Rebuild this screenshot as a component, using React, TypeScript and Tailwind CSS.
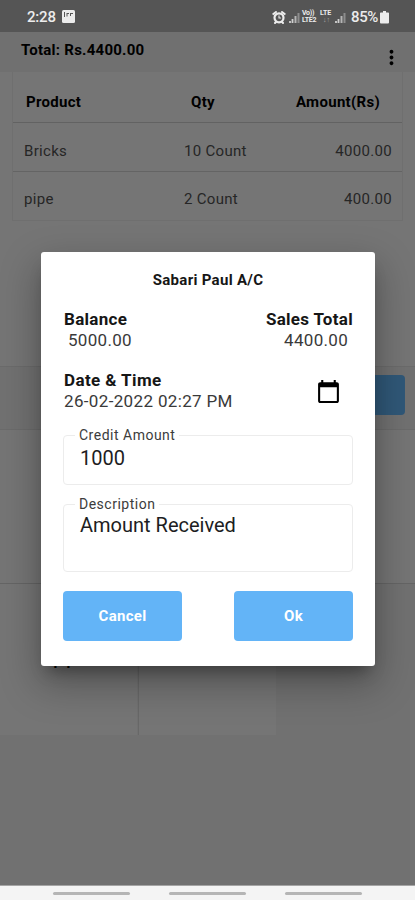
import { MdCalendarToday, MdMoreVert } from "react-icons/md";

const items = [
  { name: "Bricks", qty: "10 Count", amount: "4000.00" },
  { name: "pipe", qty: "2 Count", amount: "400.00" },
];

function Signal() {
  return (
    <svg width="12" height="13" viewBox="0 0 12 13" className="mt-px">
      <path d="M1 10v2M3.500 8v4" stroke="#d0d0d0" strokeWidth="1.8" />
      <path d="M6.500 5v7" stroke="#b5b5b5" strokeWidth="2" />
      <path d="M9.500 2v10" stroke="#8c8c8c" strokeWidth="2" />
    </svg>
  );
}

function Alarm() {
  return (
    <svg width="14" height="13" viewBox="0 0 14 13" fill="none" stroke="#ececec" strokeLinecap="round">
      <circle cx="7" cy="6.8" r="4.5" strokeWidth="2.2" />
      <path d="M1.300 3L4 1M12.700 3L10 1M3 12l1-1M11 12l-1-1" strokeWidth="2" />
      <path d="M7 4.800v2.200h1.600" strokeWidth="1.1" />
    </svg>
  );
}

function StatusBar() {
  return (
    <div className="flex h-8 items-center bg-[#555555] pl-[27px] pr-[26px] pt-[2px] text-[#ececec]">
      <span className="w-[35px] text-[15px] font-medium tracking-[-0.2px]">2:28</span>
      <svg width="13" height="13" viewBox="0 0 13 13" className="-mt-0.5">
        <rect width="13" height="13" rx="1.5" fill="#ececec" />
        <path d="M2.500 2v5M5 3v3.500M5 3.500h2M8.500 3v3M8.500 3.500h2.500" stroke="#555555" fill="none" />
      </svg>
      <div className="ml-auto flex items-center">
        <Alarm />
        <div className="ml-[3px] flex">
          <Signal />
        </div>
        <div className="ml-px w-[17px] text-[7px] font-bold leading-[7px] tracking-[-0.3px]">
          <div>Vo))</div>
          <div>LTE2</div>
        </div>
        <div className="ml-px w-[15px] text-[7px] font-bold leading-[7px]">
          <div>LTE</div>
          <div className="pl-[3px] text-[#a5a5a5]">↓↑</div>
        </div>
        <Signal />
        <span className="ml-[4px] w-[29px] text-[15px] font-medium tracking-[-0.4px]">85%</span>
        <svg width="9" height="13" viewBox="0 0 9 13">
          <path d="M3 0h3v1.500h2.200q.8 0 .8.800v9.200q0 1-1 1H1q-1 0-1-1V2.300q0-.8.800-.8H3z" fill="#ececec" />
        </svg>
      </div>
    </div>
  );
}

function ProductTable() {
  return (
    <div className="mx-3 h-[149px] border-x border-b border-[#6f6f6f] text-[15px] tracking-[0.3px] text-[#262626]">
      <div className="flex h-[51px] items-center border-b border-[#626262] pl-[13px] pr-[22px] pt-[11px] font-bold text-black">
        <span className="w-[165px]">Product</span>
        <span>Qty</span>
        <span className="ml-auto">Amount(Rs)</span>
      </div>
      {items.map((item) => (
        <div
          key={item.name}
          className="flex h-[49px] items-center border-b border-[#646464] pl-[11px] pr-[10px] pt-[8px] last:border-0 last:pt-[5px]"
        >
          <span className="w-[160px]">{item.name}</span>
          <span>{item.qty}</span>
          <span className="ml-auto">{item.amount}</span>
        </div>
      ))}
    </div>
  );
}

function Field({ label, value, className }: { label: string; value: string; className: string }) {
  return (
    <fieldset className={`rounded-[4px] border border-[#ececec] pl-[11px] ${className}`}>
      <legend className="px-[4px] text-[14px] leading-[16px] tracking-[0.5px] text-[#3c3c3c]">{label}</legend>
      <div className="pl-[5px] text-[20px] leading-[26px] tracking-normal text-[#1d1d22]">{value}</div>
    </fieldset>
  );
}

function PaymentDialog() {
  return (
    <div className="absolute left-[41px] top-[252px] h-[414px] w-[334px] rounded-[3px] bg-white px-[22px] pt-[19px] text-[17px] leading-[21px] tracking-[0.3px] text-[#3a3a3a] shadow-[0_11px_15px_-7px_rgba(0,0,0,0.35),0_16px_38px_3px_rgba(0,0,0,0.28)]">
      <h2 className="text-center text-[15px] font-bold leading-[18px] text-[#161616]">Sabari Paul A/C</h2>
      <div className="mt-[20px] flex justify-between">
        <div className="pl-px">
          <div className="font-bold text-[#161616]">Balance</div>
          <div className="pl-[4px]">5000.00</div>
        </div>
        <div className="text-right">
          <div className="font-bold text-[#161616]">Sales Total</div>
          <div className="pr-[5px]">4400.00</div>
        </div>
      </div>
      <div className="mt-[19px] flex items-center justify-between pl-px pr-[12px]">
        <div>
          <div className="font-bold tracking-[0.4px] text-[#161616]">Date &amp; Time</div>
          <div className="tracking-[0.35px]">26-02-2022 02:27 PM</div>
        </div>
        <MdCalendarToday size={25} className="text-black" />
      </div>
      <Field label="Credit Amount" value="1000" className="mt-[15px] h-[58px] pt-[2px]" />
      <Field label="Description" value="Amount Received" className="mt-[11px] h-[76px]" />
      <div className="mt-[19px] flex justify-between">
        <button className="h-[50px] w-[119px] rounded-[4px] bg-[#63b4f7] text-[15px] font-bold text-white">Cancel</button>
        <button className="h-[50px] w-[119px] rounded-[4px] bg-[#63b4f7] text-[15px] font-bold text-white">Ok</button>
      </div>
    </div>
  );
}

export default function App() {
  return (
    <div className="relative flex h-[900px] w-[415px] flex-col overflow-hidden bg-[#757575] font-[Roboto,sans-serif]">
      <StatusBar />
      <div className="flex h-10 justify-between bg-[#707070] pl-[21px] pr-[12px] text-black">
        <span className="pt-[7px] text-[15px] font-bold leading-[22px] tracking-[0.25px]">Total: Rs.4400.00</span>
        <MdMoreVert size={23} className="mt-[14px]" />
      </div>
      <ProductTable />

      {/* Action row behind the dialog */}
      <div className="mt-[145px] flex h-16 justify-end border-y border-[#6b6b6b] bg-[#717171] pr-[10px] pt-[8px]">
        <div className="h-10 w-[119px] rounded-[4px] bg-[#305878]" />
      </div>
      <div className="h-[154px] border-b border-[#656565]" />

      <div className="flex flex-1 items-start gap-[2px] bg-[#717171]">
        <div className="h-[151px] w-[137px] bg-[#757575] pt-[65px] text-center text-[15px] font-bold tracking-[0.3px] text-black">pipe</div>
        <div className="h-[151px] w-[137px] bg-[#757575] shadow-[-1px_0_0_#686868]" />
      </div>

      <div className="flex h-[15px] items-center justify-center gap-[39px] border-t border-[#a5a5a5] bg-[#f4f4f4] pt-px">
        <div className="h-[3px] w-[77px] rounded-full bg-[#b5b5b5]" />
        <div className="h-[3px] w-[77px] rounded-full bg-[#b5b5b5]" />
        <div className="h-[3px] w-[77px] rounded-full bg-[#b5b5b5]" />
      </div>

      <PaymentDialog />
    </div>
  );
}
